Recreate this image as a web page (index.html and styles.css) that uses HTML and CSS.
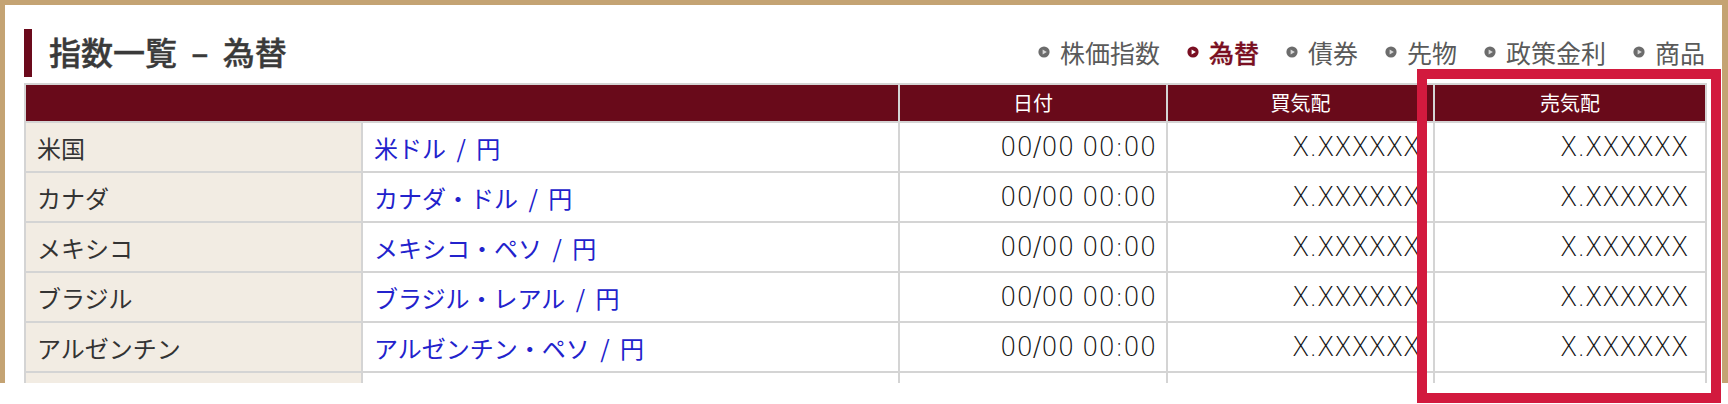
FILE: index.html
```html
<!DOCTYPE html>
<html lang="ja">
<head>
<meta charset="utf-8">
<title>指数一覧 – 為替</title>
<link rel="stylesheet" href="styles.css">
</head>
<body>
<div class="frame">
  <div class="head">
    <h1 class="title">指数一覧 – 為替</h1>
    <ul class="tabs">
      <li class="tab"><svg class="ico" viewBox="0 0 12 12"><circle cx="6" cy="6" r="5.6"/><polygon class="tri" points="4.6,3.4 8.8,6 4.6,8.6"/></svg><span>株価指数</span></li>
      <li class="tab active"><svg class="ico" viewBox="0 0 12 12"><circle cx="6" cy="6" r="5.6"/><polygon class="tri" points="4.6,3.4 8.8,6 4.6,8.6"/></svg><span>為替</span></li>
      <li class="tab"><svg class="ico" viewBox="0 0 12 12"><circle cx="6" cy="6" r="5.6"/><polygon class="tri" points="4.6,3.4 8.8,6 4.6,8.6"/></svg><span>債券</span></li>
      <li class="tab"><svg class="ico" viewBox="0 0 12 12"><circle cx="6" cy="6" r="5.6"/><polygon class="tri" points="4.6,3.4 8.8,6 4.6,8.6"/></svg><span>先物</span></li>
      <li class="tab"><svg class="ico" viewBox="0 0 12 12"><circle cx="6" cy="6" r="5.6"/><polygon class="tri" points="4.6,3.4 8.8,6 4.6,8.6"/></svg><span>政策金利</span></li>
      <li class="tab"><svg class="ico" viewBox="0 0 12 12"><circle cx="6" cy="6" r="5.6"/><polygon class="tri" points="4.6,3.4 8.8,6 4.6,8.6"/></svg><span>商品</span></li>
    </ul>
  </div>
  <table class="rates">
    <colgroup>
      <col class="c-country">
      <col class="c-pair">
      <col class="c-date">
      <col class="c-buy">
      <col class="c-sell">
    </colgroup>
    <thead>
      <tr><th colspan="2"></th><th>日付</th><th>買気配</th><th>売気配</th></tr>
    </thead>
    <tbody>
      <tr><td class="country">米国</td><td class="pair"><a href="#">米ドル / 円</a></td><td class="num date">00/00 00:00</td><td class="num buy">X.XXXXXX</td><td class="num sell">X.XXXXXX</td></tr>
      <tr><td class="country">カナダ</td><td class="pair"><a href="#">カナダ・ドル / 円</a></td><td class="num date">00/00 00:00</td><td class="num buy">X.XXXXXX</td><td class="num sell">X.XXXXXX</td></tr>
      <tr><td class="country">メキシコ</td><td class="pair"><a href="#">メキシコ・ペソ / 円</a></td><td class="num date">00/00 00:00</td><td class="num buy">X.XXXXXX</td><td class="num sell">X.XXXXXX</td></tr>
      <tr><td class="country">ブラジル</td><td class="pair"><a href="#">ブラジル・レアル / 円</a></td><td class="num date">00/00 00:00</td><td class="num buy">X.XXXXXX</td><td class="num sell">X.XXXXXX</td></tr>
      <tr><td class="country">アルゼンチン</td><td class="pair"><a href="#">アルゼンチン・ペソ / 円</a></td><td class="num date">00/00 00:00</td><td class="num buy">X.XXXXXX</td><td class="num sell">X.XXXXXX</td></tr>
      <tr><td class="country"></td><td class="pair"></td><td class="num date"></td><td class="num buy"></td><td class="num sell"></td></tr>
    </tbody>
  </table>
</div>
<div class="callout"></div>
</body>
</html>
```

FILE: styles.css
```css
html, body {
  margin: 0;
  padding: 0;
  background: #ffffff;
}

body {
  position: relative;
  width: 1728px;
  height: 404px;
  overflow: hidden;
  font-family: "Noto Sans CJK JP", "Noto Sans", sans-serif;
}

.frame {
  box-sizing: border-box;
  height: 383px;
  border-top: 5px solid #c4a373;
  border-left: 5px solid #c4a373;
  border-right: 6px solid #c4a373;
  padding: 24px 17px 0 19px;
  overflow: hidden;
  background: #ffffff;
}

.head {
  display: flex;
  align-items: center;
  height: 48px;
  margin-bottom: 6px;
}

.title {
  box-sizing: border-box;
  margin: 0;
  height: 48px;
  display: flex;
  align-items: center;
  border-left: 8px solid #6b0a1c;
  padding: 0 0 4px 17px;
  font-size: 32px;
  font-weight: 500;
  color: #3a3a3a;
  word-spacing: 7px;
  -webkit-text-stroke: 0.4px #3a3a3a;
}

.tabs {
  list-style: none;
  margin: 0 0 0 auto;
  padding: 0 0 2px 0;
  display: flex;
  align-items: center;
  gap: 27px;
}

.tab {
  display: flex;
  align-items: center;
  gap: 10px;
  font-size: 25px;
  line-height: 30px;
  color: #5a5a5a;
}

.ico {
  width: 12px;
  height: 12px;
  fill: #6c6c6c;
}

.ico .tri {
  fill: #d8d8d8;
}

.tab.active {
  color: #7a0f22;
  font-weight: 500;
  -webkit-text-stroke: 0.3px #7a0f22;
}

.tab.active .ico {
  fill: #7a0f22;
}

.tab.active .ico .tri {
  fill: #ffffff;
}

.rates {
  width: 100%;
  border-collapse: collapse;
  table-layout: fixed;
  border: 2px solid #d4d4d4;
}

.c-country { width: 337px; }
.c-pair { width: 537px; }
.c-date { width: 268px; }
.c-buy { width: 267px; }
.c-sell { width: 272px; }

.rates th {
  background: #690a1a;
  color: #ffffff;
  font-size: 20px;
  font-weight: 400;
  height: 36px;
  padding: 0;
  border: 2px solid #d4d4d4;
  text-align: center;
  line-height: 36px;
}

.rates td {
  height: 48px;
  padding: 0 12px;
  border: 2px solid #d4d4d4;
  font-size: 24px;
  color: #333333;
  white-space: nowrap;
  overflow: visible;
}

.rates td.country {
  background: #f2ece3;
  padding-left: 11px;
}

.rates td.pair {
  padding-left: 11px;
}

.rates td.pair a {
  color: #2222cc;
  text-decoration: none;
  word-spacing: 5px;
}

.rates td.num {
  font-family: "DejaVu Sans", "Liberation Sans", sans-serif;
  font-weight: 200;
  font-size: 26px;
  color: #111111;
  text-align: right;
}

.rates td.date {
  padding-right: 10px;
  letter-spacing: -0.2px;
}

.rates td.buy,
.rates td.sell {
  letter-spacing: -0.6px;
}

.rates td.buy { padding-right: 13px; }
.rates td.sell { padding-right: 17px; }

.callout {
  position: absolute;
  left: 1417px;
  top: 69px;
  width: 304px;
  height: 334px;
  box-sizing: border-box;
  border: 10px solid #d21a3e;
  pointer-events: none;
}
```
